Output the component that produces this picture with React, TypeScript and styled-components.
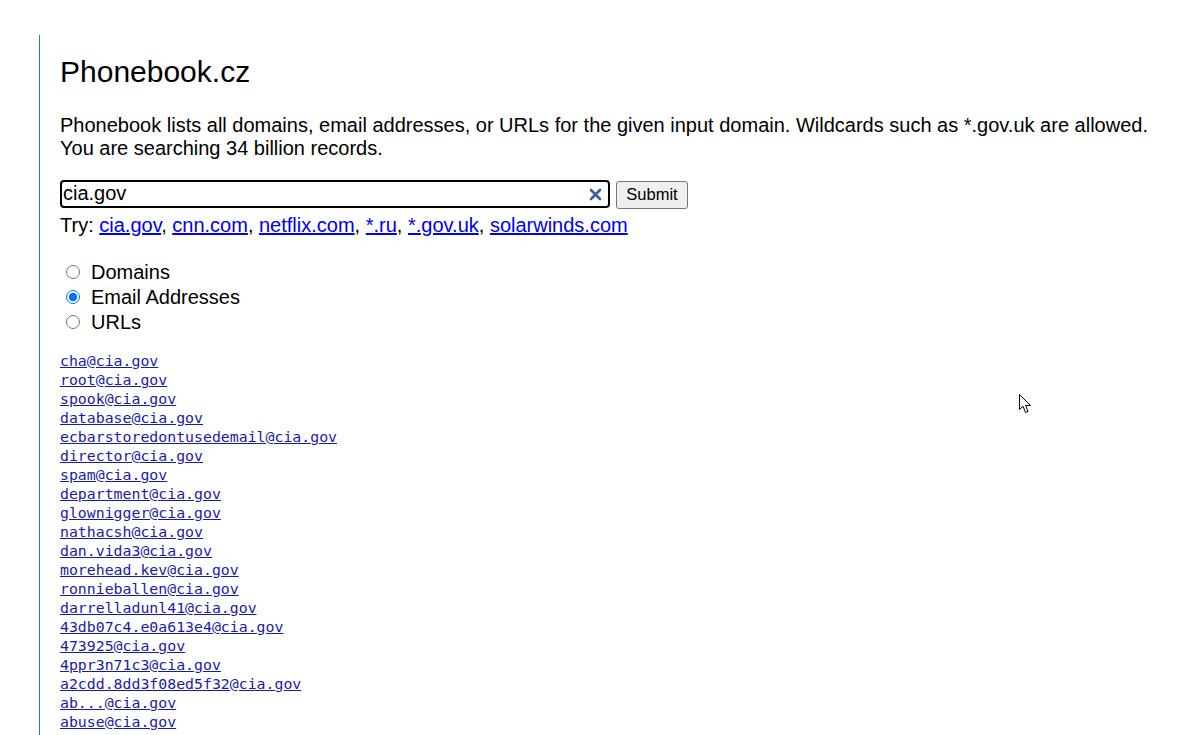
import React from "react";
import styled, { createGlobalStyle } from "styled-components";

const Global = createGlobalStyle`
  html, body { margin: 0; padding: 0; background: #fff; }
  body { font-family: "Liberation Sans", Arial, sans-serif; color: #000; overflow: hidden; }
`;

const Page = styled.div`
  padding: 35px 0 0 39px;
  position: relative;
  min-height: 700px;
`;

const Column = styled.main`
  border-left: 1px solid #1f78c1;
  padding: 20px 0 0 20px;
  min-height: 700px;
`;

const Title = styled.h1`
  margin: 0;
  font-size: 30px;
  font-weight: normal;
  line-height: 34.5px;
`;

const Intro = styled.p`
  margin: 24px 0 0;
  font-size: 20px;
  line-height: 23px;
`;

const SearchRow = styled.form`
  display: flex;
  align-items: flex-start;
  gap: 6px;
  margin-top: 20px;
`;

const InputWrap = styled.div`
  position: relative;
  width: 550px;
  height: 28px;
`;

const SearchInput = styled.input`
  box-sizing: border-box;
  width: 100%;
  height: 28px;
  border: 2px solid #000;
  border-radius: 4px;
  padding: 0 30px 0 1px;
  font-family: "Liberation Sans", Arial, sans-serif;
  font-size: 20px;
  color: #000;
  outline: none;
  background: #fff;
`;

const ClearIcon = styled.svg`
  position: absolute;
  right: 8px;
  top: 8px;
  width: 13px;
  height: 13px;
`;

const SubmitButton = styled.button`
  box-sizing: border-box;
  margin-top: 1px;
  height: 28px;
  width: 72px;
  background: #efefef;
  border: 1px solid #767676;
  border-radius: 3px;
  font-family: "Liberation Sans", Arial, sans-serif;
  font-size: 16.5px;
  color: #000;
  padding: 0;
`;

const TryLine = styled.div`
  margin-top: 5px;
  font-size: 20px;
  line-height: 23px;
`;

const Link = styled.a`
  color: #0000ee;
  text-decoration: underline;
`;

const RadioGroup = styled.div`
  margin-top: 23px;
  display: flex;
  flex-direction: column;
`;

const RadioRow = styled.label`
  display: flex;
  align-items: center;
  height: 25px;
  font-size: 20px;
`;

const Radio = styled.input`
  width: 14px;
  height: 14px;
  margin: 0 11px 0 6px;
  accent-color: #0075ff;
`;

const Results = styled.div`
  margin-top: 17px;
  display: flex;
  flex-direction: column;
`;

const ResultLink = styled.a`
  font-family: "DejaVu Sans Mono", "Liberation Mono", monospace;
  font-size: 14.85px;
  line-height: 19px;
  color: #1a1aa8;
  text-decoration: underline;
  align-self: flex-start;
`;

const Cursor = styled.svg`
  position: absolute;
  left: 1019px;
  top: 394px;
  width: 13px;
  height: 20px;
`;

const emails = [
  "cha@cia.gov",
  "root@cia.gov",
  "spook@cia.gov",
  "database@cia.gov",
  "ecbarstoredontusedemail@cia.gov",
  "director@cia.gov",
  "spam@cia.gov",
  "department@cia.gov",
  "glownigger@cia.gov",
  "nathacsh@cia.gov",
  "dan.vida3@cia.gov",
  "morehead.kev@cia.gov",
  "ronnieballen@cia.gov",
  "darrelladunl41@cia.gov",
  "43db07c4.e0a613e4@cia.gov",
  "473925@cia.gov",
  "4ppr3n71c3@cia.gov",
  "a2cdd.8dd3f08ed5f32@cia.gov",
  "ab...@cia.gov",
  "abuse@cia.gov",
];

const tries = ["cia.gov", "cnn.com", "netflix.com", "*.ru", "*.gov.uk", "solarwinds.com"];

export default function App() {
  return (
    <Page>
      <Global />
      <Column>
        <Title>Phonebook.cz</Title>
        <Intro>
          Phonebook lists all domains, email addresses, or URLs for the given input domain. Wildcards such as *.gov.uk are allowed.
          <br />
          You are searching 34 billion records.
        </Intro>
        <SearchRow onSubmit={(e) => e.preventDefault()}>
          <InputWrap>
            <SearchInput defaultValue="cia.gov" />
            <ClearIcon viewBox="0 0 13 13">
              <path d="M2 2 L11 11 M11 2 L2 11" stroke="#3a5f93" strokeWidth="2.6" strokeLinecap="round" />
            </ClearIcon>
          </InputWrap>
          <SubmitButton type="submit">Submit</SubmitButton>
        </SearchRow>
        <TryLine>
          Try:{" "}
          {tries.map((t, i) => (
            <React.Fragment key={t}>
              <Link href="#">{t}</Link>
              {i < tries.length - 1 ? ", " : ""}
            </React.Fragment>
          ))}
        </TryLine>
        <RadioGroup>
          <RadioRow>
            <Radio type="radio" name="kind" />
            Domains
          </RadioRow>
          <RadioRow>
            <Radio type="radio" name="kind" defaultChecked />
            Email Addresses
          </RadioRow>
          <RadioRow>
            <Radio type="radio" name="kind" />
            URLs
          </RadioRow>
        </RadioGroup>
        <Results>
          {emails.map((e) => (
            <ResultLink key={e} href="#">
              {e}
            </ResultLink>
          ))}
        </Results>
      </Column>
      <Cursor viewBox="0 0 13 20">
        <path d="M0.5 0.5 L0.5 15.5 L4 12.2 L6.5 18.5 L9 17.4 L6.6 11.4 L11.5 11.4 Z" fill="#fff" stroke="#000" strokeWidth="1" strokeLinejoin="round" />
      </Cursor>
    </Page>
  );
}
